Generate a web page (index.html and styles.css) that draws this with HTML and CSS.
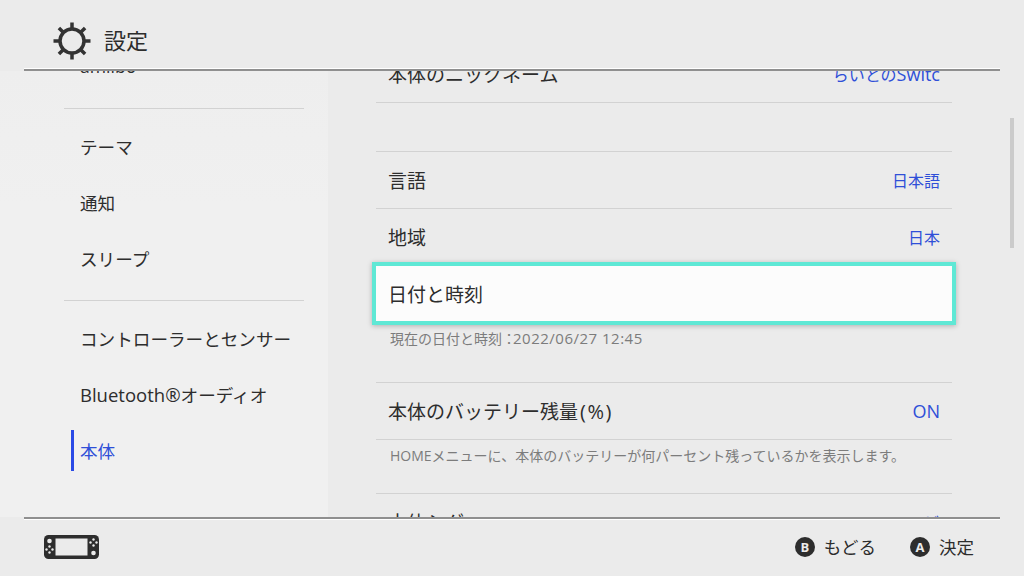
FILE: index.html
```html
<!DOCTYPE html>
<html lang="ja">
<head>
  <meta charset="UTF-8">
  <title>設定</title>
  <link rel="stylesheet" href="styles.css">
</head>
<body>
  <header class="top-bar">
    <svg class="gear" width="38" height="38" viewBox="0 0 38 38">
      <g stroke="#333" stroke-width="3.500" fill="none">
        <circle cx="19" cy="19" r="12"/>
        <path d="M19 0.500V7M19 31V37.500M0.500 19H7M31 19H37.500M5.900 5.900L10.500 10.500M27.500 27.500L32.100 32.100M5.900 32.100L10.500 27.500M27.500 10.500L32.100 5.900"/>
      </g>
    </svg>
    <h1 class="page-title">設定</h1>
  </header>

  <main class="main">
    <nav class="side-menu">
      <ul class="menu-group menu-group-first">
        <li class="menu-item">amiibo</li>
      </ul>
      <ul class="menu-group">
        <li class="menu-item">テーマ</li>
        <li class="menu-item">通知</li>
        <li class="menu-item">スリープ</li>
      </ul>
      <ul class="menu-group">
        <li class="menu-item">コントローラーとセンサー</li>
        <li class="menu-item"><span class="menu-latin">Bluetooth®</span>オーディオ</li>
        <li class="menu-item menu-item-active">本体</li>
      </ul>
    </nav>

    <section class="settings">
      <div class="row row-first">
        <span>本体のニックネーム</span>
        <span class="row-value">らいとの<span class="value-latin">Switc</span></span>
      </div>
      <div class="row row-spaced">
        <span>言語</span>
        <span class="row-value">日本語</span>
      </div>
      <div class="row">
        <span>地域</span>
        <span class="row-value">日本</span>
      </div>
      <div class="row row-selected">
        <span>日付と時刻</span>
      </div>
      <p class="row-note row-note-time">現在の日付と時刻：<span class="note-date">2022/06/27 12:45</span></p>
      <div class="row">
        <span>本体のバッテリー残量<span class="row-unit">(%)</span></span>
        <span class="row-value value-latin">ON</span>
      </div>
      <p class="row-note">HOMEメニューに、本体のバッテリーが何パーセント残っているかを表示します。</p>
      <div class="row">
        <span>本体シグ</span>
        <span class="row-value">テレビ</span>
      </div>
    </section>

    <div class="scroll-thumb"></div>
  </main>

  <footer class="bottom-bar">
    <svg class="console" width="55" height="24" viewBox="0 0 55 24">
      <rect x="0" y="0" width="55" height="24" rx="4.500" fill="#2d2d2d"/>
      <rect x="11.500" y="3.500" width="32" height="17" fill="#ebebeb"/>
      <g fill="#ebebeb">
        <circle cx="5.500" cy="6" r="2.300"/>
        <circle cx="5.500" cy="11.500" r="1.200"/>
        <circle cx="5.500" cy="17.500" r="1.200"/>
        <circle cx="2.500" cy="14.500" r="1.200"/>
        <circle cx="8.500" cy="14.500" r="1.200"/>
        <circle cx="49.500" cy="18" r="2.300"/>
        <circle cx="49.500" cy="4.500" r="1.200"/>
        <circle cx="49.500" cy="10.500" r="1.200"/>
        <circle cx="46.500" cy="7.500" r="1.200"/>
        <circle cx="52.500" cy="7.500" r="1.200"/>
      </g>
    </svg>
    <div class="hints">
      <div class="hint"><span class="hint-key">B</span>もどる</div>
      <div class="hint"><span class="hint-key">A</span>決定</div>
    </div>
  </footer>
</body>
</html>
```

FILE: styles.css
```css
* {
  box-sizing: border-box;
}
html, body {
  margin: 0;
  height: 100%;
}
body {
  width: 1024px;
  height: 576px;
  overflow: hidden;
  display: flex;
  flex-direction: column;
  background: #ebebeb;
  color: #2d2d2d;
  font-family: "Open Sans", "Noto Sans CJK JP", sans-serif;
}
.top-bar {
  height: 71px;
  flex: none;
  margin: 0 24px;
  padding: 13px 0 0 29px;
  display: flex;
  align-items: center;
  gap: 13px;
  border-bottom: 2px solid #8f8f8f;
  box-shadow: inset 0 -1px 0 #fff;
  position: relative;
  z-index: 2;
}
.page-title {
  margin: 0 0 2px;
  font-size: 22px;
  font-weight: 400;
  line-height: 30px;
}
.main {
  flex: 1;
  min-height: 0;
  display: flex;
  overflow: hidden;
  position: relative;
}
.side-menu {
  width: 328px;
  flex: none;
  padding: 0 24px 0 64px;
  background: linear-gradient(#eeeeee, #f0f0f0 30%);
}
.menu-group {
  margin: 0;
  padding: 9px 0 14px;
  list-style: none;
  border-bottom: 1px solid #d2d2d2;
}
.menu-group:last-child {
  border-bottom: none;
}
.menu-group-first {
  margin-top: -42px;
}
.menu-item {
  height: 56px;
  padding-left: 16px;
  display: flex;
  align-items: center;
  font-size: 17.600px;
  white-space: nowrap;
  position: relative;
}
.menu-latin {
  font-size: 18.500px;
}
.menu-item-active {
  color: #2f4fd8;
}
.menu-item-active::before {
  content: "";
  position: absolute;
  left: 7px;
  top: 8px;
  bottom: 7px;
  width: 3px;
  background: #2a4ae6;
}
.settings {
  width: 624px;
  flex: none;
  padding-left: 48px;
}
.row {
  height: 57px;
  padding: 0 12px;
  display: flex;
  align-items: center;
  justify-content: space-between;
  font-size: 19px;
  border-bottom: 1px solid #d2d2d2;
}
.row-first {
  margin-top: -25px;
}
.row-spaced {
  height: 58px;
  margin-top: 48px;
  border-top: 1px solid #d2d2d2;
}
.row-unit {
  margin-left: 2px;
  font-size: 20px;
  letter-spacing: 1.500px;
}
.row-value {
  font-size: 16px;
  color: #2f4fd8;
}
.value-latin {
  font-size: 18px;
}
.row-selected {
  height: 63px;
  margin: -4px -4px 0;
  padding: 0 12px;
  background: #fcfcfc;
  border: 4px solid #5fe8d5;
  box-shadow: 0 1px 5px rgba(0, 0, 0, 0.25);
  position: relative;
}
.row-note {
  margin: 0;
  height: 54px;
  padding: 6px 12px 0 14px;
  font-size: 14px;
  line-height: 20px;
  color: #7c7c7c;
  border-bottom: 1px solid #d2d2d2;
}
.row-note-time {
  height: 58px;
  padding-top: 3px;
}
.note-date {
  margin-left: -3px;
  font-size: 15px;
  letter-spacing: 0.500px;
}
.scroll-thumb {
  position: absolute;
  left: 1010px;
  top: 47px;
  width: 4px;
  height: 130px;
  background: #cbcbcb;
}
.bottom-bar {
  height: 59px;
  flex: none;
  margin: 0 24px;
  padding: 0 26px 2px 20px;
  display: flex;
  align-items: center;
  justify-content: space-between;
  border-top: 2px solid #8f8f8f;
  box-shadow: inset 0 1px 0 #fff;
}
.hints {
  display: flex;
  gap: 34px;
}
.hint {
  display: flex;
  align-items: center;
  gap: 9px;
  font-size: 17.500px;
}
.hint-key {
  width: 20px;
  height: 20px;
  border-radius: 50%;
  background: #2d2d2d;
  color: #ebebeb;
  display: flex;
  align-items: center;
  justify-content: center;
  font-size: 13px;
  font-weight: 700;
}
```
